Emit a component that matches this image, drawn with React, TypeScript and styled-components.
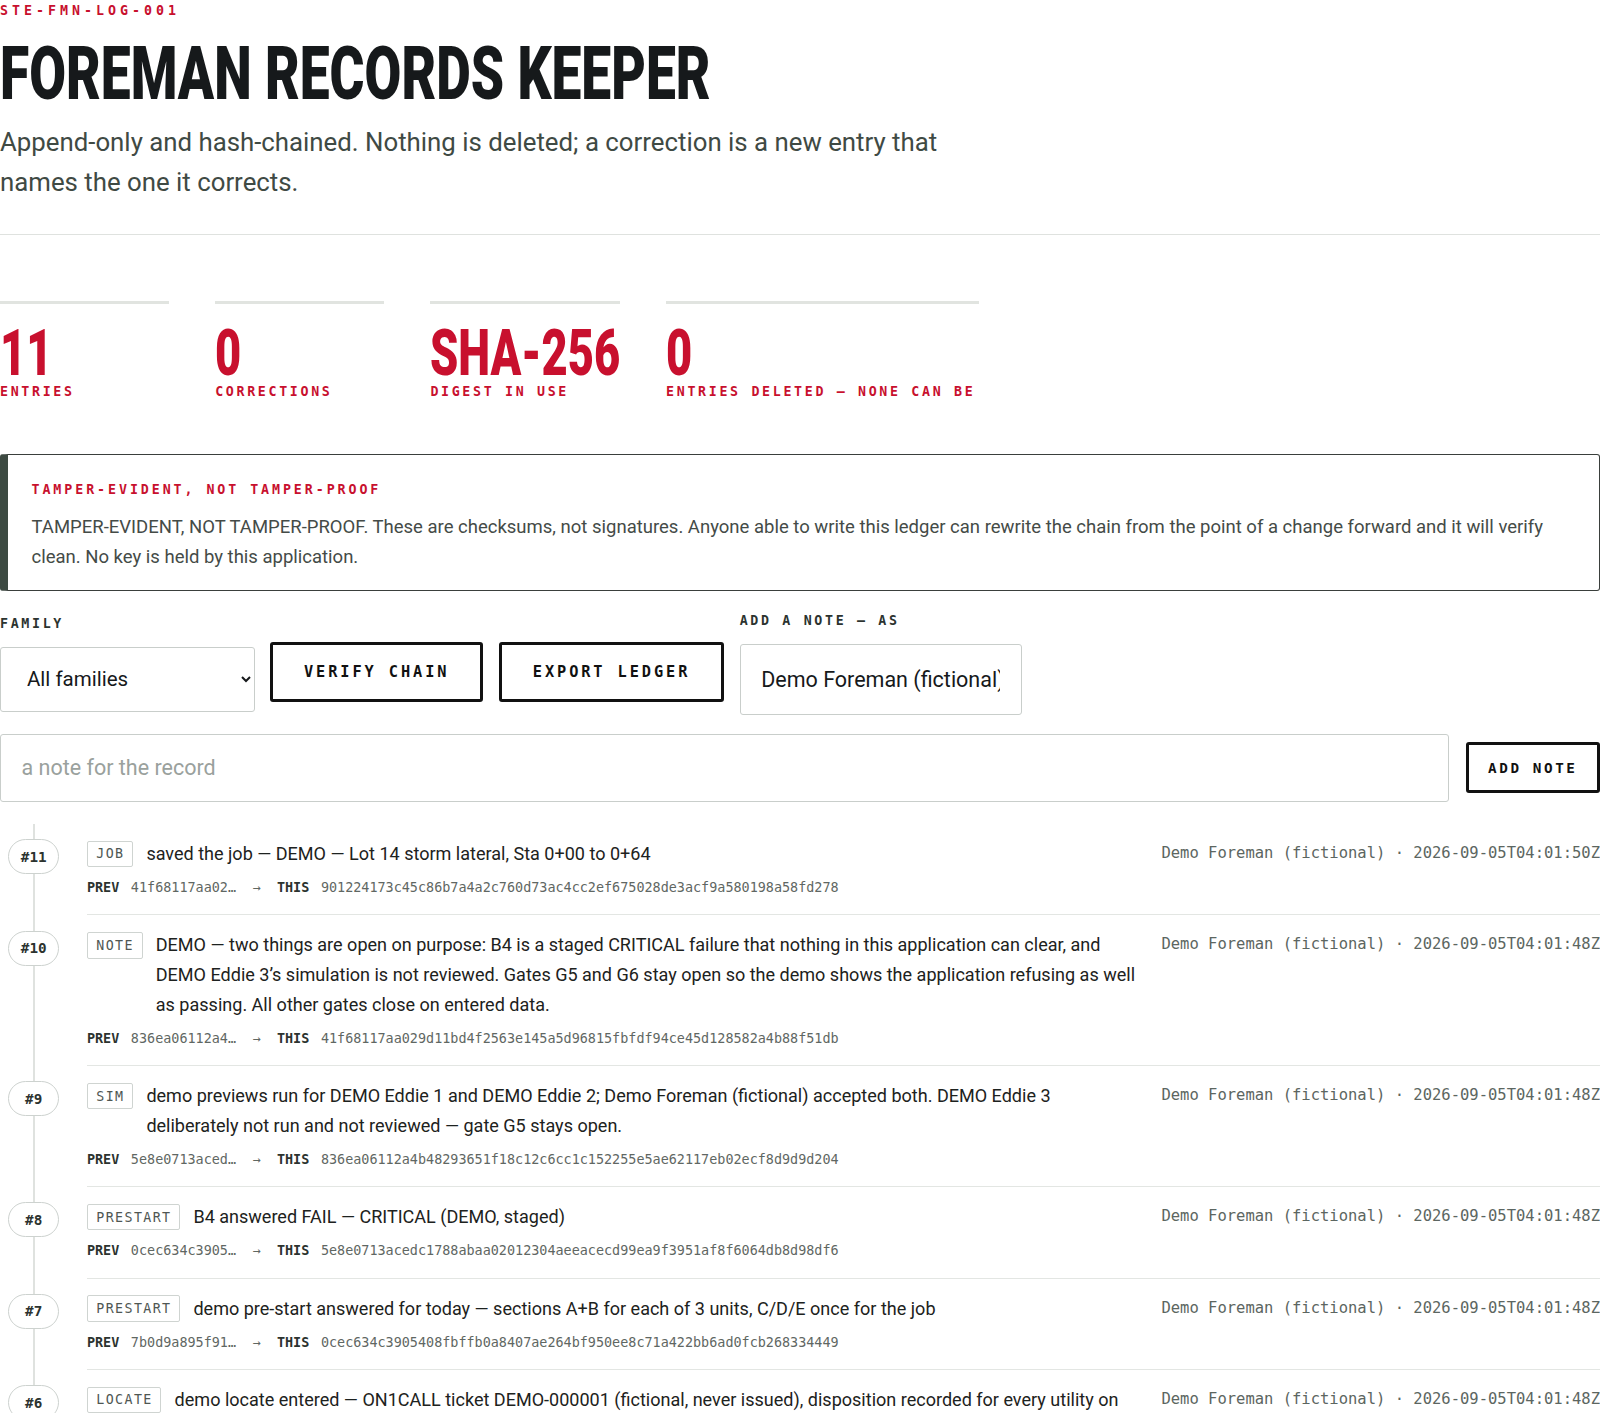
import React from 'react';
import styled, { createGlobalStyle } from 'styled-components';

const RED = '#c8102e';
const INK = '#16191b';
const MONO = '"DejaVu Sans Mono", "Liberation Mono", monospace';
const SANS = 'Roboto, "Noto Sans", "Liberation Sans", sans-serif';

const GlobalStyle = createGlobalStyle`
  * { box-sizing: border-box; }
  body {
    margin: 0;
    background: #ffffff;
    color: ${INK};
    font-family: ${SANS};
  }
`;

const Page = styled.div`
  width: 100%;
  padding: 2px 0 60px;
`;

const Header = styled.header`
  padding-bottom: 31px;
  border-bottom: 1px solid #dfe2df;
`;

const Eyebrow = styled.div`
  font-family: ${MONO};
  font-weight: 700;
  font-size: 13.3px;
  line-height: 18px;
  letter-spacing: 0.3em;
  color: ${RED};
`;

/* condensed display face: no condensed family is installed, so the bold face is narrowed */
const Squeeze = styled.span<{ $x: number }>`
  display: inline-block;
  white-space: nowrap;
  transform: scaleX(${({ $x }) => $x});
  transform-origin: 0 50%;
`;

const Title = styled.h1`
  margin: 16.5px 0 0;
  font-family: ${SANS};
  font-weight: 900;
  font-size: 74.5px;
  line-height: 1;
  color: ${INK};
`;

const Lede = styled.p`
  margin: 12px 0 0;
  max-width: 980px;
  font-size: 25.8px;
  line-height: 39.9px;
  color: #3f4a44;
`;

const Stats = styled.section`
  display: grid;
  grid-template-columns: 168.7px 168.7px 189.2px 313px;
  column-gap: 46.5px;
  margin-top: 66.6px;
`;

const Stat = styled.div`
  border-top: 3px solid #e1e4e0;
  padding-top: 19.4px;
`;

const StatValue = styled.div`
  font-family: ${SANS};
  font-weight: 900;
  font-size: 65.5px;
  line-height: 0.9;
  color: ${RED};
`;

const StatLabel = styled.div`
  font-family: ${MONO};
  font-weight: 700;
  font-size: 13.3px;
  line-height: 18px;
  letter-spacing: 0.2em;
  color: ${RED};
  white-space: nowrap;
`;

const Callout = styled.aside`
  margin-top: 53.5px;
  border: 1px solid #3a3f3c;
  border-left: 8px solid #3d4a42;
  border-radius: 3px;
  padding: 25.8px 24px 18px 23.5px;
`;

const CalloutTitle = styled.div`
  font-family: ${MONO};
  font-weight: 700;
  font-size: 13.3px;
  line-height: 18px;
  letter-spacing: 0.22em;
  color: ${RED};
`;

const CalloutBody = styled.p`
  margin: 14px 0 0;
  font-size: 18.5px;
  line-height: 29.7px;
  color: #444b47;
`;

const Controls = styled.div`
  display: flex;
  align-items: flex-start;
  gap: 15.4px;
  margin-top: 21.7px;
`;

const Field = styled.label<{ $top?: number }>`
  display: flex;
  flex-direction: column;
  gap: 14.5px;
  margin-top: ${({ $top }) => $top ?? 0}px;
`;

const FieldLabel = styled.span`
  font-family: ${MONO};
  font-weight: 700;
  font-size: 13.3px;
  line-height: 16px;
  letter-spacing: 0.2em;
  color: #2c332f;
`;

const Select = styled.select`
  width: 254.6px;
  height: 65.5px;
  padding: 0 12px 0 22px;
  border: 1px solid #c9cecb;
  border-radius: 3px;
  background: #fff;
  font-family: ${SANS};
  font-size: 20.5px;
  color: ${INK};
`;

const TextInput = styled.input<{ $w: string; $h: number }>`
  width: ${({ $w }) => $w};
  min-width: 0;
  height: ${({ $h }) => $h}px;
  padding: 0 20.5px;
  border: 1px solid #c9cecb;
  border-radius: 3px;
  background: #fff;
  font-family: ${SANS};
  font-size: 21.5px;
  color: ${INK};
  &::placeholder {
    color: #9aa19d;
  }
`;

const Button = styled.button<{ $small?: boolean; $top?: number }>`
  flex: none;
  height: ${({ $small }) => ($small ? 51 : 60.4)}px;
  padding: 0 ${({ $small }) => ($small ? 19.5 : 31)}px;
  margin-top: ${({ $top }) => $top ?? 0}px;
  border: 3px solid #111;
  border-radius: 3px;
  background: #fff;
  font-family: ${MONO};
  font-weight: 700;
  font-size: ${({ $small }) => ($small ? 14.3 : 15.3)}px;
  letter-spacing: ${({ $small }) => ($small ? 0.18 : 0.19)}em;
  color: #111;
  white-space: nowrap;
  cursor: pointer;
`;

const NoteRow = styled.div`
  display: flex;
  align-items: center;
  gap: 16.3px;
  margin-top: 18.5px;
`;

const Timeline = styled.ol`
  position: relative;
  list-style: none;
  margin: 21.8px 0 0;
  padding: 0;
  &::before {
    content: '';
    position: absolute;
    left: 32.5px;
    top: 0;
    bottom: 0;
    width: 2.5px;
    background: #dfe2df;
  }
`;

const Entry = styled.li`
  display: grid;
  grid-template-columns: 67.4px 1fr;
  column-gap: 19.5px;
`;

const Seq = styled.div`
  position: relative;
  justify-self: center;
  margin-top: 15.2px;
  min-width: 51px;
  height: 35px;
  padding: 0 6px;
  display: flex;
  align-items: center;
  justify-content: center;
  border: 1px solid #cdd2cf;
  border-radius: 17.5px;
  background: #fff;
  font-family: ${MONO};
  font-weight: 700;
  font-size: 14.3px;
  color: #2c332f;
`;

const EntryBody = styled.div`
  padding: 15px 0 16.4px;
  border-bottom: 1px solid #e3e6e3;
`;

const TopRow = styled.div`
  display: flex;
  align-items: flex-start;
`;

const Tag = styled.span`
  flex: none;
  margin: 1.6px 13.2px 0 0;
  height: 26.6px;
  padding: 0 7.7px 0 8.4px;
  display: inline-flex;
  align-items: center;
  border: 1px solid #cfd4d1;
  border-radius: 2px;
  font-family: ${MONO};
  font-size: 13.3px;
  letter-spacing: 1.4px;
  color: #4f5753;
`;

const Message = styled.div`
  flex: 1;
  font-size: 18.05px;
  line-height: 29.7px;
  color: #1d2220;
`;

const Meta = styled.div`
  flex: none;
  margin-left: 15px;
  font-family: ${MONO};
  font-size: 15.5px;
  line-height: 29.7px;
  color: #5c6661;
  white-space: nowrap;
`;

const Chain = styled.div`
  margin-top: 9.3px;
  font-family: ${MONO};
  font-size: 13.45px;
  line-height: 20px;
  color: #5f6763;
  white-space: nowrap;
`;

const ChainKey = styled.b`
  margin-right: 11.6px;
  color: #2c332f;
`;

const Arrow = styled.span`
  margin: 0 16.4px;
`;

type Item = {
  n: number;
  kind: string;
  text: string;
  at: string;
  prev: string;
  hash: string;
};

const ENTRIES: Item[] = [
  {
    n: 11,
    kind: 'JOB',
    text: 'saved the job — DEMO — Lot 14 storm lateral, Sta 0+00 to 0+64',
    at: '2026-09-05T04:01:50Z',
    prev: '41f68117aa02…',
    hash: '901224173c45c86b7a4a2c760d73ac4cc2ef675028de3acf9a580198a58fd278',
  },
  {
    n: 10,
    kind: 'NOTE',
    text: 'DEMO — two things are open on purpose: B4 is a staged CRITICAL failure that nothing in this application can clear, and DEMO Eddie 3’s simulation is not reviewed. Gates G5 and G6 stay open so the demo shows the application refusing as well as passing. All other gates close on entered data.',
    at: '2026-09-05T04:01:48Z',
    prev: '836ea06112a4…',
    hash: '41f68117aa029d11bd4f2563e145a5d96815fbfdf94ce45d128582a4b88f51db',
  },
  {
    n: 9,
    kind: 'SIM',
    text: 'demo previews run for DEMO Eddie 1 and DEMO Eddie 2; Demo Foreman (fictional) accepted both. DEMO Eddie 3 deliberately not run and not reviewed — gate G5 stays open.',
    at: '2026-09-05T04:01:48Z',
    prev: '5e8e0713aced…',
    hash: '836ea06112a4b48293651f18c12c6cc1c152255e5ae62117eb02ecf8d9d9d204',
  },
  {
    n: 8,
    kind: 'PRESTART',
    text: 'B4 answered FAIL — CRITICAL (DEMO, staged)',
    at: '2026-09-05T04:01:48Z',
    prev: '0cec634c3905…',
    hash: '5e8e0713acedc1788abaa02012304aeeacecd99ea9f3951af8f6064db8d98df6',
  },
  {
    n: 7,
    kind: 'PRESTART',
    text: 'demo pre-start answered for today — sections A+B for each of 3 units, C/D/E once for the job',
    at: '2026-09-05T04:01:48Z',
    prev: '7b0d9a895f91…',
    hash: '0cec634c3905408fbffb0a8407ae264bf950ee8c71a422bb6ad0fcb268334449',
  },
  {
    n: 6,
    kind: 'LOCATE',
    text: 'demo locate entered — ON1CALL ticket DEMO-000001 (fictional, never issued), disposition recorded for every utility on the ticket.',
    at: '2026-09-05T04:01:48Z',
    prev: '3a9c51e0d7b2…',
    hash: '7b0d9a895f91c2e4a07d3b6f18e5c9a20d47b1e6f3c8a95d02e7b4f61c3a8d90',
  },
  {
    n: 5,
    kind: 'CREW',
    text: 'demo crew entered — DEMO Eddie 1, DEMO Eddie 2, DEMO Eddie 3 (all fictional)',
    at: '2026-09-05T04:01:47Z',
    prev: 'e41b7c93a0d5…',
    hash: '3a9c51e0d7b24f8e16a0c9d357b2e8f14a06c3d9e7b25f18a4c60e3d9b71f25a',
  },
  {
    n: 4,
    kind: 'UNIT',
    text: 'demo units registered — 3 units on this job',
    at: '2026-09-05T04:01:47Z',
    prev: '9f03d6b2e18c…',
    hash: 'e41b7c93a0d568f2b1c4e97a03d5f8b26c1e94a7d03f5b82e6c19a4d7f30b5e8',
  },
  {
    n: 3,
    kind: 'JOB',
    text: 'created the job — DEMO — Lot 14 storm lateral',
    at: '2026-09-05T04:01:46Z',
    prev: '52c8e0a7f3b1…',
    hash: '9f03d6b2e18c75a4f09b3d2e61c8a7f45b930e2d6c18f4a7b39e05d2c61f8a47',
  },
  {
    n: 2,
    kind: 'NOTE',
    text: 'demo ledger opened — every name and number in it is fictional',
    at: '2026-09-05T04:01:46Z',
    prev: 'a6d1f4c8e2b7…',
    hash: '52c8e0a7f3b1d94e26c05a8f17b3e9d42c60f85a1b7e3d94c02f6a8e15b7d39c',
  },
  {
    n: 1,
    kind: 'LEDGER',
    text: 'ledger started',
    at: '2026-09-05T04:01:45Z',
    prev: '000000000000…',
    hash: 'a6d1f4c8e2b709e3c5a81f6d4b27e0c9d358a1f6b3e82d05c7a94e1b6f23d80e',
  },
];

const STATS = [
  { value: '11', label: 'ENTRIES' },
  { value: '0', label: 'CORRECTIONS' },
  { value: 'SHA-256', label: 'DIGEST IN USE' },
  { value: '0', label: 'ENTRIES DELETED — NONE CAN BE' },
];

export default function App() {
  return (
    <Page>
      <GlobalStyle />
      <Header>
        <Eyebrow>STE-FMN-LOG-001</Eyebrow>
        <Title>
          <Squeeze $x={0.716}>FOREMAN RECORDS KEEPER</Squeeze>
        </Title>
        <Lede>
          Append-only and hash-chained. Nothing is deleted; a correction is a new entry that
          names the one it corrects.
        </Lede>
      </Header>

      <Stats>
        {STATS.map((s) => (
          <Stat key={s.label}>
            <StatValue>
              <Squeeze $x={0.69}>{s.value}</Squeeze>
            </StatValue>
            <StatLabel>{s.label}</StatLabel>
          </Stat>
        ))}
      </Stats>

      <Callout>
        <CalloutTitle>TAMPER-EVIDENT, NOT TAMPER-PROOF</CalloutTitle>
        <CalloutBody>
          TAMPER-EVIDENT, NOT TAMPER-PROOF. These are checksums, not signatures. Anyone able to
          write this ledger can rewrite the chain from the point of a change forward and it will
          verify clean. No key is held by this application.
        </CalloutBody>
      </Callout>

      <Controls>
        <Field $top={3}>
          <FieldLabel>FAMILY</FieldLabel>
          <Select defaultValue="all">
            <option value="all">All families</option>
            <option value="job">Job</option>
            <option value="prestart">Prestart</option>
            <option value="sim">Sim</option>
            <option value="locate">Locate</option>
            <option value="note">Note</option>
          </Select>
        </Field>
        <Button $top={28.4}>VERIFY CHAIN</Button>
        <Button $top={28.4}>EXPORT LEDGER</Button>
        <Field>
          <FieldLabel>ADD A NOTE — AS</FieldLabel>
          <TextInput $w="282px" $h={71.5} defaultValue="Demo Foreman (fictional)" />
        </Field>
      </Controls>

      <NoteRow>
        <TextInput $w="1452px" $h={68.5} placeholder="a note for the record" />
        <Button $small>ADD NOTE</Button>
      </NoteRow>

      <Timeline>
        {ENTRIES.map((e) => (
          <Entry key={e.n}>
            <Seq>#{e.n}</Seq>
            <EntryBody>
              <TopRow>
                <Tag>{e.kind}</Tag>
                <Message>{e.text}</Message>
                <Meta>Demo Foreman (fictional) · {e.at}</Meta>
              </TopRow>
              <Chain>
                <ChainKey>PREV</ChainKey>
                {e.prev}
                <Arrow>→</Arrow>
                <ChainKey>THIS</ChainKey>
                {e.hash}
              </Chain>
            </EntryBody>
          </Entry>
        ))}
      </Timeline>
    </Page>
  );
}
